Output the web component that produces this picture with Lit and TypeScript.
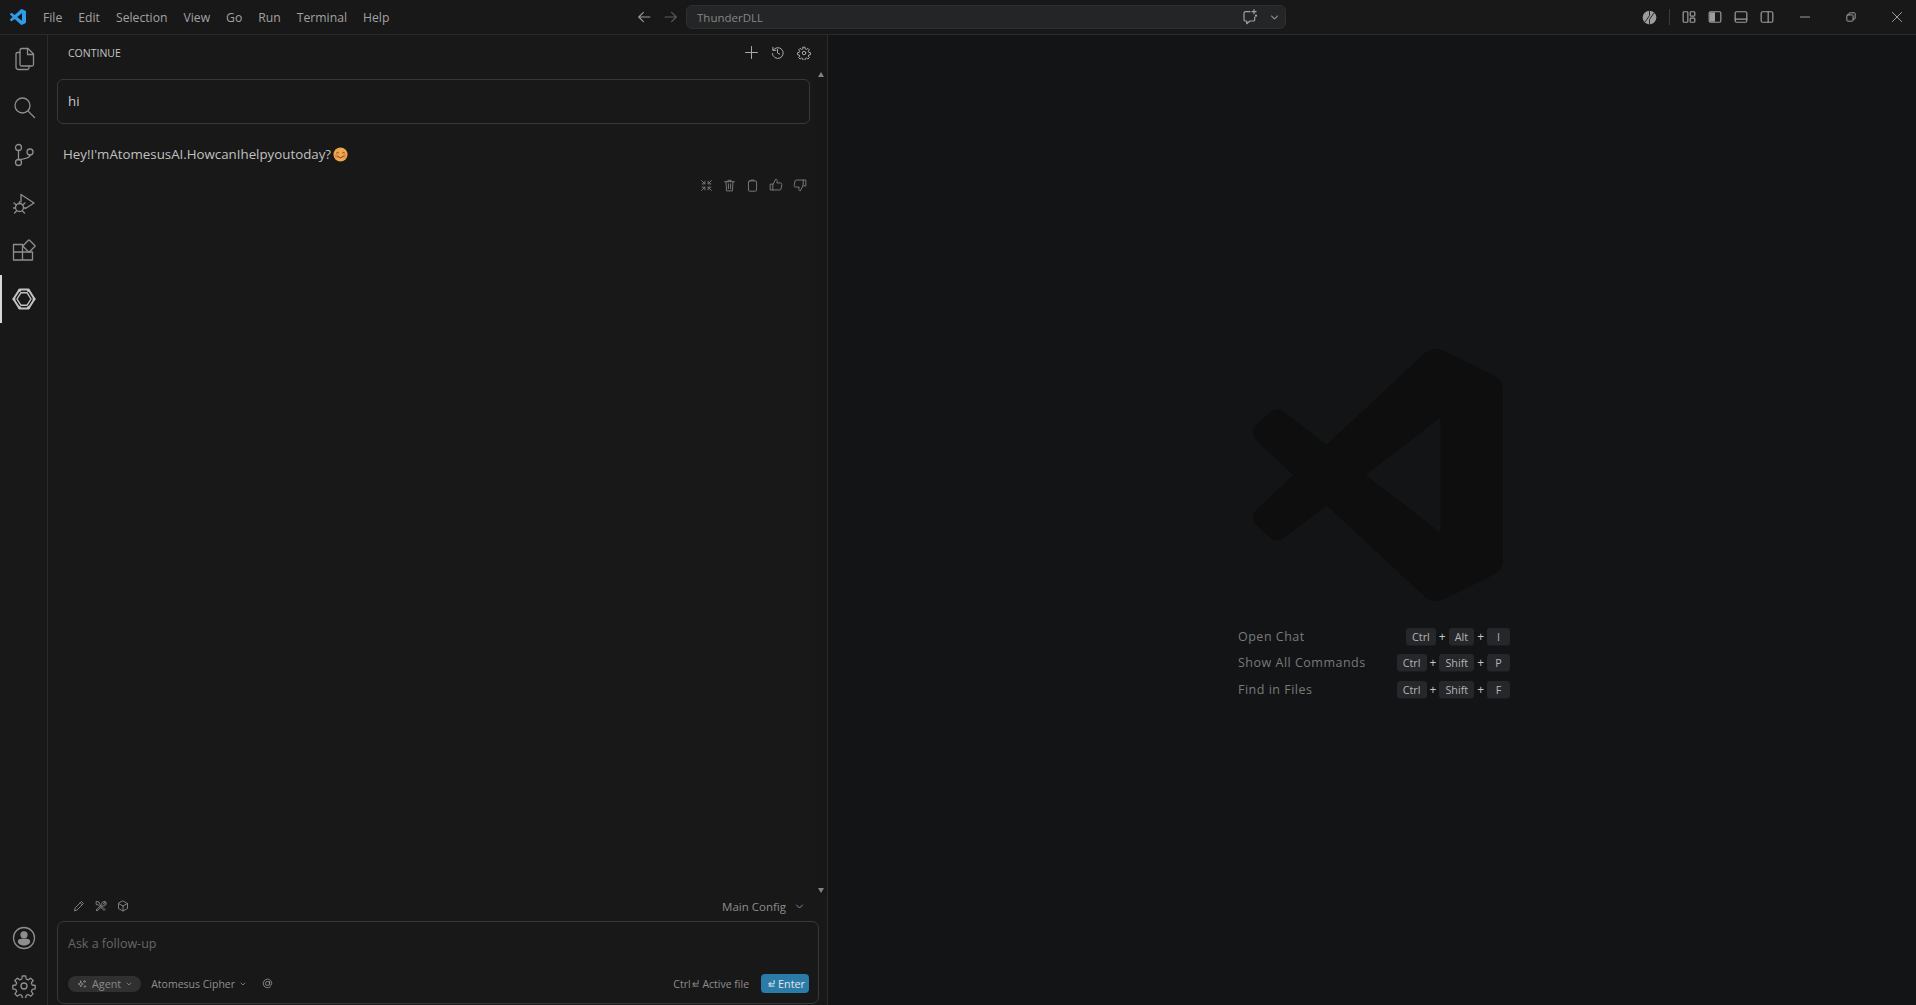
import { LitElement, html, css, svg } from 'lit';
import { customElement } from 'lit/decorators.js';

const LOGO = 'M23.15 2.587L18.21.21a1.494 1.494 0 0 0-1.705.29l-9.46 8.63-4.12-3.128a.999.999 0 0 0-1.276.057L.327 7.261A1 1 0 0 0 .326 8.74L3.899 12 .326 15.26a1 1 0 0 0 .001 1.479L1.65 17.94a.999.999 0 0 0 1.276.057l4.12-3.128 9.46 8.63a1.492 1.492 0 0 0 1.704.29l4.942-2.377A1.5 1.5 0 0 0 24 20.06V3.939a1.5 1.5 0 0 0-.85-1.352zm-5.146 14.861L10.826 12l7.178-5.448v10.896z';

// all drawn on a 24 box, stroke only unless noted
const ICONS = {
  files: svg`<path d="M9.500 1.500h6.500l5.500 5.500v10.500a1.500 1.500 0 0 1-1.500 1.500H9.500A1.500 1.500 0 0 1 8 17.500V3a1.500 1.500 0 0 1 1.500-1.500z"/><path d="M15.500 1.500v6h6"/><path d="M8 5.500H5.500A1.500 1.500 0 0 0 4 7v13a2.500 2.500 0 0 0 2.500 2.500H15.500a1.500 1.500 0 0 0 1.500-1.500v-2"/>`,
  search: svg`<circle cx="10.500" cy="10.500" r="7.500"/><path d="M16 16l6.500 6.500"/>`,
  git: svg`<circle cx="6.500" cy="4.500" r="3"/><circle cx="6.500" cy="19.500" r="3"/><circle cx="18" cy="9" r="3"/><path d="M6.500 7.500v9M18 12c0 3-4 3.300-6.500 3.800-2.500.4-5 .9-5 .9"/>`,
  debug: svg`<path d="M9 3.500v7.500M9 3.500l13 8.500-8.500 5.500"/><circle cx="7.500" cy="16.500" r="4"/><path d="M7.500 12.500v-1.800M2 12l2.500 2M13 12l-2.500 2M1.500 17h2M11.500 17h2M2.500 22l2-2M12.500 22l-2-2"/>`,
  ext: svg`<path d="M1.500 5.500h9V21h-9zM1.500 13h19v8h-9.500"/><rect x="12.500" y="2.500" width="9" height="9" rx=".8" transform="rotate(45 17 7)"/>`,
  ring: svg`<path d="M7.500 2.500h9l6 9.500-6 9.500h-9l-6-9.500z" stroke-width="2"/><path d="M8.800 5.800h6.400l3.800 6.200-3.800 6.200H8.800L5 12z" stroke-width="1.400"/><g fill="currentColor" stroke="none"><circle cx="7.500" cy="3.500" r="1.500"/><circle cx="16.500" cy="3.500" r="1.500"/><circle cx="7.500" cy="20.500" r="1.500"/><circle cx="16.500" cy="20.500" r="1.500"/><circle cx="22" cy="12" r="1.500"/><circle cx="2" cy="12" r="1.500"/></g>`,
  account: svg`<circle cx="12" cy="12" r="10.500"/><circle cx="12" cy="8.800" r="3" fill="currentColor"/><path d="M6.500 15.500c0-1.500 1.500-2 3-2h5c1.500 0 3 .5 3 2 0 2-2.500 3.500-5.500 3.500s-5.500-1.500-5.500-3.500z" fill="currentColor"/>`,
  gear: svg`<circle cx="12" cy="12" r="3"/><path d="M10.300 2h3.400l.5 3 2 .9 2.500-1.800 2.400 2.400-1.800 2.500.9 2 3 .5v3.400l-3 .5-.9 2 1.800 2.500-2.400 2.400-2.500-1.800-2 .9-.5 3h-3.400l-.5-3-2-.9-2.500 1.800-2.400-2.400 1.800-2.500-.9-2-3-.5v-3.400l3-.5.9-2-1.800-2.500 2.400-2.400 2.500 1.800 2-.9z"/>`,
  plus: svg`<path d="M12 1v22M1 12h22"/>`,
  history: svg`<path d="M3.500 2.500v5.500h5.500"/><path d="M3.800 8a10 10 0 1 1-1.300 6"/><path d="M12 6.500V13l4 2"/>`,
  left: svg`<path d="M22 12H3M11 4l-8 8 8 8"/>`,
  right: svg`<path d="M2 12h19M13 4l8 8-8 8"/>`,
  chev: svg`<path d="M4 8l8 8 8-8"/>`,
  chat: svg`<path d="M12 4H5a2 2 0 0 0-2 2v10a2 2 0 0 0 2 2h2v4l5-4h5a2 2 0 0 0 2-2v-4"/><path d="M18 1v6M15 4h6"/><circle cx="21" cy="10" r=".8"/>`,
  copilot: svg`<circle cx="12" cy="12" r="11" fill="currentColor" stroke="none"/><path d="M12 1v8l-7 10M12 23v-8l7-10" stroke="#181818" stroke-width="1.400"/>`,
  layout: svg`<rect x="2" y="3" width="8" height="18" rx="1.500"/><rect x="14" y="3" width="8" height="7.500" rx="1.500"/><rect x="14" y="14" width="8" height="7" rx="1.500"/>`,
  panelL: svg`<rect x="2" y="3" width="20" height="18" rx="2.500"/><path d="M3 4h9v16H3z" fill="currentColor" stroke="none"/>`,
  panelB: svg`<rect x="2" y="3" width="20" height="18" rx="2.500"/><path d="M2 15.500h20"/>`,
  panelR: svg`<rect x="2" y="3" width="20" height="18" rx="2.500"/><path d="M14 3v18"/>`,
  min: svg`<path d="M1 12h22"/>`,
  restore: svg`<rect x="2" y="7" width="15" height="15" rx="2"/><path d="M7 7V4a2 2 0 0 1 2-2h11a2 2 0 0 1 2 2v11a2 2 0 0 1-2 2h-3"/>`,
  close: svg`<path d="M1 1l22 22M23 1L1 23"/>`,
  collapse: svg`<path d="M3 3l6 6M9 4v5H4M21 3l-6 6M15 4v5h5M3 21l6-6M9 20v-5H4M21 21l-6-6M15 20v-5h5"/>`,
  trash: svg`<path d="M3 5h18M9 5V2.500h6V5M5.500 5l1 17h11l1-17M10 9v9M14 9v9"/>`,
  clip: svg`<rect x="4.500" y="3.500" width="15" height="19" rx="2"/><path d="M9 3.500V2h6v1.500"/>`,
  up: svg`<path d="M7 10.500l4.500-8.500c2 0 2.800 1.500 2.500 3.500l-.5 3h6.500c1.500 0 2.200 1.200 2 2.500l-1.500 8c-.2 1-1 1.500-2 1.500H7zM7 10.500H2V20.500h5"/>`,
  down: svg`<path d="M17 13.500l-4.500 8.500c-2 0-2.800-1.500-2.500-3.500l.5-3H4c-1.500 0-2.200-1.200-2-2.500l1.500-8c.2-1 1-1.500 2-1.500H17zM17 13.500h5V3.500h-5"/>`,
  pencil: svg`<path d="M3 21l1.500-5.500L17 3l4 4L8.500 19.500z"/><path d="M14.500 5.500l4 4"/>`,
  tools: svg`<path d="M3 3l5 1 1 4 11 11-2 2L7 10l-4-1zM20.500 3.500l-3.500 3 .5 1.500 1.500.5 3-3.500a5 5 0 0 1-6.500 6.500L4 22l-2-2L13.500 9.500A5 5 0 0 1 20.500 3.500z"/>`,
  cube: svg`<path d="M12 2l9 5v10l-9 5-9-5V7z"/><path d="M3 7l9 5 9-5M12 12v10"/>`,
  spark: svg`<path d="M9 5l1.500 5L15 12l-4.500 2L9 19l-1.500-5L3 12l4.500-2z"/><circle cx="18" cy="6" r="2"/><circle cx="19" cy="18" r="1.800"/>`,
  at: svg`<circle cx="12" cy="12" r="4.500"/><path d="M16.500 7.500v6.500c0 2 3 2.500 4.300.5C22.500 10 19 2.500 12 2.500A9.500 9.500 0 1 0 18 19.500"/>`,
  ret: svg`<path d="M19 4v9H5M9.500 8.500L5 13l4.500 4.500"/><path d="M5 19h14"/>`,
};

type IconName = keyof typeof ICONS;

const ico = (name: IconName, size: number, width = 1.5) => html`<svg class="ico" width=${size} height=${size} viewBox="0 0 24 24" fill="none" stroke="currentColor" stroke-width=${width * (24 / size)} stroke-linejoin="round" stroke-linecap="round">${ICONS[name]}</svg>`;

const MENUS = ['File', 'Edit', 'Selection', 'View', 'Go', 'Run', 'Terminal', 'Help'];

const SHORTCUTS = [
  { label: 'Open Chat', keys: ['Ctrl', 'Alt', 'I'] },
  { label: 'Show All Commands', keys: ['Ctrl', 'Shift', 'P'] },
  { label: 'Find in Files', keys: ['Ctrl', 'Shift', 'F'] },
];

@customElement('app-root')
export class AppRoot extends LitElement {
  static styles = css`
    :host {
      display: flex;
      flex-direction: column;
      width: 100%;
      height: 1005px;
      overflow: hidden;
      background: #181818;
      color: #ccc;
      font-family: "Open Sans", "Liberation Sans", sans-serif;
      font-size: 12px;
    }
    .ico { display: block; flex: none; }

    /* title bar */
    .titlebar {
      display: grid;
      grid-template-columns: 1fr 700px 1fr;
      height: 35px;
      flex: none;
      box-sizing: border-box;
      border-bottom: 1px solid #2b2b2b;
      align-items: center;
    }
    .left { display: flex; align-items: center; padding-left: 10px; }
    .logo { width: 16px; height: 16px; fill: #2e9be6; margin-right: 17px; }
    .menu { display: flex; gap: 16px; color: #a2a2a2; font-size: 12.200px; }
    .center { display: flex; align-items: center; margin-left: 29px; }
    .nav { display: flex; gap: 13px; color: #9a9a9a; margin-right: 8px; }
    .nav .off { color: #5c5c5c; }
    .cmd {
      width: 600px;
      height: 24px;
      box-sizing: border-box;
      display: flex;
      align-items: center;
      padding: 0 6px 0 10px;
      background: #242526;
      border: 1px solid #2e2f30;
      border-radius: 6px;
      color: #858585;
      font-size: 11.500px;
    }
    .cmd span { flex: 1; }
    .cmd .ask { color: #a0a0a0; margin-right: 12px; }
    .right { display: flex; align-items: center; justify-content: flex-end; color: #9c9c9c; padding-right: 14px; }
    .right .copilot { margin-right: 12px; }
    .right .divider { width: 1px; height: 16px; background: #3a3a3a; margin-right: 12px; }
    .right .tool { margin-right: 12px; }
    .win { display: flex; margin-left: 26px; gap: 36px; }

    /* main */
    .main { flex: 1; display: flex; min-height: 0; }
    .activity {
      width: 48px;
      flex: none;
      box-sizing: border-box;
      border-right: 1px solid #2b2b2b;
      display: flex;
      flex-direction: column;
      color: #8e8e8e;
      margin-bottom: -5px;
    }
    .act { height: 48px; display: flex; align-items: center; justify-content: center; box-sizing: border-box; border-left: 2px solid transparent; padding-right: 2px; }
    .act.on { border-left-color: #d7d7d7; color: #c4c4c4; }
    .grow { flex: 1; }

    /* sidebar */
    .side {
      width: 780px;
      flex: none;
      display: flex;
      flex-direction: column;
      box-sizing: border-box;
      border-right: 1px solid #2b2b2b;
    }
    .side-head {
      height: 37px;
      flex: none;
      box-sizing: border-box;
      display: flex;
      align-items: center;
      padding: 0 16px 2px 20px;
      font-size: 10.500px;
      color: #c4c4c4;
    }
    .side-head span { flex: 1; }
    .side-head .acts { display: flex; gap: 13px; color: #aaa; align-items: center; }
    .chat-wrap { flex: 1; display: flex; min-height: 0; }
    .chat { flex: 1; padding: 7px 5px 0 9px; min-width: 0; }
    .sent {
      height: 45px;
      box-sizing: border-box;
      border: 1px solid #383838;
      border-radius: 6px;
      display: flex;
      align-items: center;
      padding: 0 0 2px 10px;
      font-size: 13.300px;
      color: #c9c9c9;
    }
    .reply { display: flex; align-items: center; margin-top: 21px; padding-left: 6px; font-size: 13.300px; color: #c0c0c0; height: 18px; }
    .face { margin-left: 2px; }
    .msg-acts { display: flex; justify-content: flex-end; align-items: center; gap: 10px; margin-top: 15px; padding-right: 3px; color: #777; }
    .scroll { width: 12px; flex: none; display: flex; flex-direction: column; justify-content: space-between; align-items: center; padding: 0 0 1px; background: #171717; }
    .arrow { width: 0; height: 0; border-left: 3.500px solid transparent; border-right: 3.500px solid transparent; }
    .arrow.top { border-bottom: 5px solid #828282; }
    .arrow.bot { border-top: 5px solid #828282; }

    .tool-row { height: 24px; flex: none; display: flex; align-items: center; padding: 0 23px 0 25px; color: #7e7e7e; }
    .tool-row .icons { display: flex; gap: 10px; flex: 1; }
    .cfg { display: flex; align-items: center; gap: 9px; font-size: 11.500px; color: #8d8d8d; }
    .input {
      margin: 3px 8px 1px 9px;
      height: 83px;
      flex: none;
      box-sizing: border-box;
      border: 1px solid #383838;
      border-radius: 7px;
      padding: 12px 9px 10px 10px;
      display: flex;
      flex-direction: column;
      justify-content: space-between;
    }
    .ph { font-size: 12.500px; color: #676767; line-height: 20px; }
    .row { display: flex; align-items: center; height: 19px; font-size: 10.500px; color: #8f8f8f; }
    .pill { display: flex; align-items: center; gap: 5px; height: 16px; padding: 0 9px; border-radius: 8px; background: #303030; color: #8a8a8a; margin-right: 10px; font-size: 10.800px; }
    .model { display: flex; align-items: center; gap: 5px; margin-right: 16px; }
    .hint { margin-left: auto; display: flex; align-items: center; margin-right: 12px; }
    .send { display: flex; align-items: center; gap: 2px; height: 19px; padding: 0 4px 0 6px; border-radius: 4px; background: #2a7ba8; color: #e6e6e6; font-size: 10.800px; }

    /* editor */
    .editor {
      flex: 1;
      min-width: 0;
      background: #121416;
      display: flex;
      flex-direction: column;
      align-items: center;
      justify-content: center;
      padding: 8px 0 0 4px;
    }
    .water { width: 250px; height: 254px; fill: #0e0e0e; margin-left: 8px; }
    .keys { display: grid; grid-template-columns: auto auto; column-gap: 31px; row-gap: 4px; margin-top: 23px; }
    .label { color: #7a7a7a; font-size: 12.500px; letter-spacing: 0.5px; display: flex; align-items: center; height: 22.500px; }
    .combo { display: flex; align-items: center; justify-content: flex-end; gap: 3px; color: #c5c5c5; font-size: 12px; }
    kbd {
      font: inherit;
      font-size: 10.800px;
      min-width: 11px;
      height: 17px;
      padding: 0 6px;
      text-align: center;
      line-height: 17px;
      background: #25272b;
      border-radius: 3px;
      color: #b4b4b4;
      box-shadow: 0 1px 0 #1b1c1f;
    }
  `;

  private renderSmile() {
    return html`<svg class="ico face" width="15" height="15" viewBox="0 0 16 16">
      <circle cx="8" cy="8" r="7.500" fill="#eda84e" />
      <circle cx="3.800" cy="9.500" r="2" fill="#ea7f4f" />
      <circle cx="12.200" cy="9.500" r="2" fill="#ea7f4f" />
      <path d="M3.500 6.500q1.300-1.500 2.600 0M9.900 6.500q1.300-1.500 2.600 0M4.800 10q3.200 3 6.400 0" fill="none" stroke="#6b3d16" stroke-width="1" />
    </svg>`;
  }

  private renderTitlebar() {
    return html`<header class="titlebar">
      <div class="left">
        <svg class="logo" viewBox="0 0 24 24"><path d=${LOGO} /></svg>
        <nav class="menu">${MENUS.map((m) => html`<span>${m}</span>`)}</nav>
      </div>
      <div class="center">
        <div class="nav">${ico('left', 14, 1.1)}<span class="off">${ico('right', 14, 1.1)}</span></div>
        <div class="cmd">
          <span>ThunderDLL</span>
          <div class="ask">${ico('chat', 16, 1.2)}</div>
          ${ico('chev', 9, 1.1)}
        </div>
      </div>
      <div class="right">
        <div class="copilot">${ico('copilot', 15)}</div>
        <div class="divider"></div>
        <div class="tool">${ico('layout', 14, 1.2)}</div>
        <div class="tool">${ico('panelL', 14, 1.2)}</div>
        <div class="tool">${ico('panelB', 14, 1.2)}</div>
        <div>${ico('panelR', 14, 1.2)}</div>
        <div class="win">${ico('min', 10, 1)}${ico('restore', 10, 1)}${ico('close', 10, 1)}</div>
      </div>
    </header>`;
  }

  private renderActivity() {
    return html`<aside class="activity">
      <div class="act">${ico('files', 24, 1.3)}</div>
      <div class="act">${ico('search', 24, 1.3)}</div>
      <div class="act">${ico('git', 24, 1.3)}</div>
      <div class="act">${ico('debug', 24, 1.3)}</div>
      <div class="act">${ico('ext', 24, 1.3)}</div>
      <div class="act on">${ico('ring', 24, 1.3)}</div>
      <div class="grow"></div>
      <div class="act">${ico('account', 24, 1.3)}</div>
      <div class="act">${ico('gear', 24, 1.3)}</div>
    </aside>`;
  }

  private renderSide() {
    return html`<section class="side">
      <div class="side-head">
        <span>CONTINUE</span>
        <div class="acts">${ico('plus', 13, 1)}${ico('history', 13, 1)}${ico('gear', 14, 1)}</div>
      </div>
      <div class="chat-wrap">
        <div class="chat">
          <div class="sent">hi</div>
          <div class="reply">Hey!I'mAtomesusAI.HowcanIhelpyoutoday?${this.renderSmile()}</div>
          <div class="msg-acts">
            ${ico('collapse', 13, 1)}${ico('trash', 13, 1)}${ico('clip', 13, 1)}${ico('up', 14, 1)}${ico('down', 14, 1)}
          </div>
        </div>
        <div class="scroll"><div class="arrow top"></div><div class="arrow bot"></div></div>
      </div>
      <div class="tool-row">
        <div class="icons">${ico('pencil', 12, 1)}${ico('tools', 12, 1)}${ico('cube', 12, 1)}</div>
        <div class="cfg"><span>Main Config</span>${ico('chev', 9, 1)}</div>
      </div>
      <div class="input">
        <div class="ph">Ask a follow-up</div>
        <div class="row">
          <div class="pill">${ico('spark', 10, 0.9)}<span>Agent</span>${ico('chev', 6, 0.8)}</div>
          <div class="model"><span>Atomesus Cipher</span>${ico('chev', 6, 0.8)}</div>
          ${ico('at', 11, 0.9)}
          <div class="hint"><span>Ctrl</span>${ico('ret', 9, 0.9)}<span>&nbsp;Active file</span></div>
          <div class="send">${ico('ret', 9, 1)}<span>Enter</span></div>
        </div>
      </div>
    </section>`;
  }

  private renderEditor() {
    return html`<main class="editor">
      <svg class="water" viewBox="0 0 24 24" preserveAspectRatio="none"><path d=${LOGO} /></svg>
      <div class="keys">
        ${SHORTCUTS.map((s) => html`
          <div class="label">${s.label}</div>
          <div class="combo">
            ${s.keys.map((k, i) => html`${i > 0 ? html`<span>+</span>` : ''}<kbd>${k}</kbd>`)}
          </div>
        `)}
      </div>
    </main>`;
  }

  render() {
    return html`
      ${this.renderTitlebar()}
      <div class="main">
        ${this.renderActivity()}
        ${this.renderSide()}
        ${this.renderEditor()}
      </div>
    `;
  }
}

declare global {
  interface HTMLElementTagNameMap {
    'app-root': AppRoot;
  }
}
